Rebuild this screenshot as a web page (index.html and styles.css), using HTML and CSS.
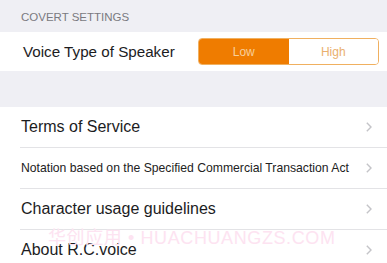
FILE: index.html
```html
<!DOCTYPE html>
<html lang="en">
<head>
  <meta charset="UTF-8">
  <meta name="viewport" content="width=device-width, initial-scale=1.0">
  <title>Settings</title>
  <link rel="stylesheet" href="styles.css">
</head>
<body>
  <div class="section-header">COVERT SETTINGS</div>
  <div class="group">
    <div class="row voice-row">
      <span class="label voice-label">Voice Type of Speaker</span>
      <div class="segmented">
        <button class="segment active">Low</button>
        <button class="segment">High</button>
      </div>
    </div>
  </div>

  <div class="spacer"></div>

  <div class="group list">
    <div class="row link-row">
      <span class="label">Terms of Service</span>
      <svg class="chevron" viewBox="0 0 6 10"><polyline points="0.8,0.8 5,5 0.8,9.2"/></svg>
    </div>
    <div class="row link-row">
      <span class="label small">Notation based on the Specified Commercial Transaction Act</span>
      <svg class="chevron" viewBox="0 0 6 10"><polyline points="0.8,0.8 5,5 0.8,9.2"/></svg>
    </div>
    <div class="row link-row">
      <span class="label">Character usage guidelines</span>
      <svg class="chevron" viewBox="0 0 6 10"><polyline points="0.8,0.8 5,5 0.8,9.2"/></svg>
    </div>
    <div class="row link-row">
      <span class="label">About R.C.voice</span>
      <svg class="chevron" viewBox="0 0 6 10"><polyline points="0.8,0.8 5,5 0.8,9.2"/></svg>
    </div>
  </div>

  <div class="watermark">华创应用 • HUACHUANGZS.COM</div>
</body>
</html>
```

FILE: styles.css
```css
body {
  font-family: "Liberation Sans", Arial, "Noto Sans CJK SC", sans-serif;
  margin: 0;
  background-color: #efeff4;
  color: #1c1c1e;
  position: relative;
  overflow: hidden;
  height: 263px;
}

.section-header {
  height: 32px;
  padding-left: 21px;
  font-size: 11.5px;
  line-height: 34px;
  color: #7a7a80;
}

.group {
  background: #ffffff;
}

.row {
  display: flex;
  align-items: center;
  justify-content: space-between;
}

.voice-row {
  height: 39px;
  padding: 0 8px 0 23px;
}

.label {
  font-size: 16px;
}

.voice-label {
  font-size: 15.2px;
}

.label.small {
  font-size: 12.2px;
  color: #222;
}

.segmented {
  display: flex;
  width: 181px;
  height: 27px;
  border: 1px solid #f0b060;
  border-radius: 4px;
  overflow: hidden;
  box-sizing: border-box;
}

.segment {
  flex: 1;
  border: none;
  margin: 0;
  padding: 0;
  font-family: inherit;
  font-size: 12px;
  background: #ffffff;
  color: #eab06e;
}

.segment.active {
  background: #ef7c00;
  color: #f8cf9a;
}

.spacer {
  height: 36px;
}

.link-row {
  height: 40px;
  margin-left: 20px;
  padding: 0 15px 0 1px;
  border-bottom: 1px solid #e3e3e6;
}

.chevron {
  width: 6px;
  height: 10px;
  fill: none;
  stroke: #c4c4c8;
  stroke-width: 1.4;
}

.watermark {
  position: absolute;
  left: 48px;
  top: 229px;
  font-size: 18px;
  line-height: 1;
  color: #fde3f1;
  letter-spacing: 0.6px;
  pointer-events: none;
}
```
